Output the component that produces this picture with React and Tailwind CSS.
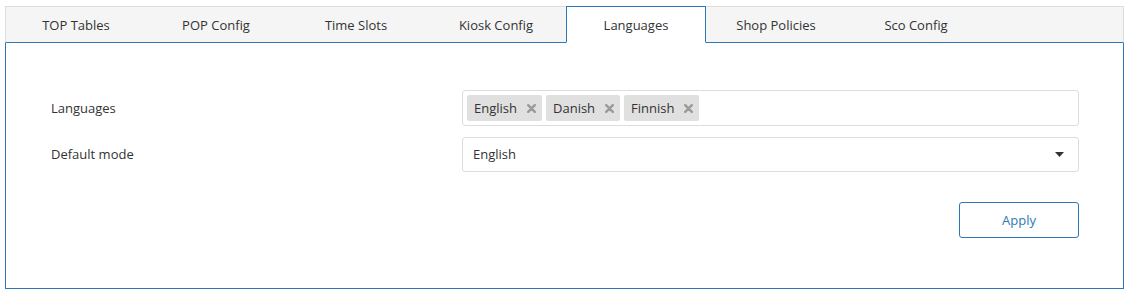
import React from "react";

const tabs = ["TOP Tables", "POP Config", "Time Slots", "Kiosk Config", "Languages", "Shop Policies", "Sco Config"];

function X() {
  return (
    <svg width="9" height="9" viewBox="0 0 9 9" className="shrink-0">
      <path d="M1.2 1.2 L7.8 7.8 M7.8 1.2 L1.2 7.8" stroke="#9a9a9a" strokeWidth="2.4" strokeLinecap="round" />
    </svg>
  );
}

function Chip({ label }) {
  return (
    <div className="flex items-center h-[26px] bg-[#e0e0e0] rounded-[2px] pl-[7px] pr-[6px] gap-[10px]">
      <span className="pt-px">{label}</span>
      <X />
    </div>
  );
}

export default function App() {
  return (
    <div className="bg-white w-[1129px] h-[294px] pt-[6px] pl-[5px] text-[13px] text-[#333]" style={{ fontFamily: '"Segoe UI", "Open Sans", "Noto Sans", sans-serif' }}>
      <div className="w-[1119px]">
        <div className="flex h-[37px] bg-[#f5f5f5] border-t border-l border-r border-[#dddddd] border-b border-b-[#2e77b6]">
          {tabs.map((t) => {
            const active = t === "Languages";
            return (
              <div
                key={t}
                className={
                  active
                    ? "w-[140px] h-[37px] -mt-px -mb-px pt-[2px] flex items-center justify-center bg-white border border-[#2e77b6] border-b-white"
                    : "w-[140px] pt-[2px] flex items-center justify-center"
                }
              >
                {t}
              </div>
            );
          })}
        </div>
        <div className="h-[246px] border-l border-r border-b border-[#2e77b6] pt-[47px] pr-[44px]">
          <div className="flex items-center h-[36px]">
            <div className="w-[456px] pl-[45px] pt-px">Languages</div>
            <div className="flex-1 h-[36px] border border-[#dddddd] rounded-[3px] flex items-center pl-[4px] gap-[4px]">
              <Chip label="English" />
              <Chip label="Danish" />
              <Chip label="Finnish" />
            </div>
          </div>
          <div className="flex items-center h-[35px] mt-[11px]">
            <div className="w-[456px] pl-[45px] pt-px">Default mode</div>
            <div className="flex-1 h-[35px] border border-[#dddddd] rounded-[3px] flex items-center justify-between pl-[10px] pr-[14px]">
              <span className="pt-px">English</span>
              <svg width="9" height="5" viewBox="0 0 9 5">
                <path d="M0 0 L9 0 L4.5 5 Z" fill="#333" />
              </svg>
            </div>
          </div>
          <div className="flex justify-end mt-[30px]">
            <button className="w-[120px] h-[36px] pt-px border border-[#2e77b6] rounded-[3px] text-[#2e77b6] bg-white">Apply</button>
          </div>
        </div>
      </div>
    </div>
  );
}
